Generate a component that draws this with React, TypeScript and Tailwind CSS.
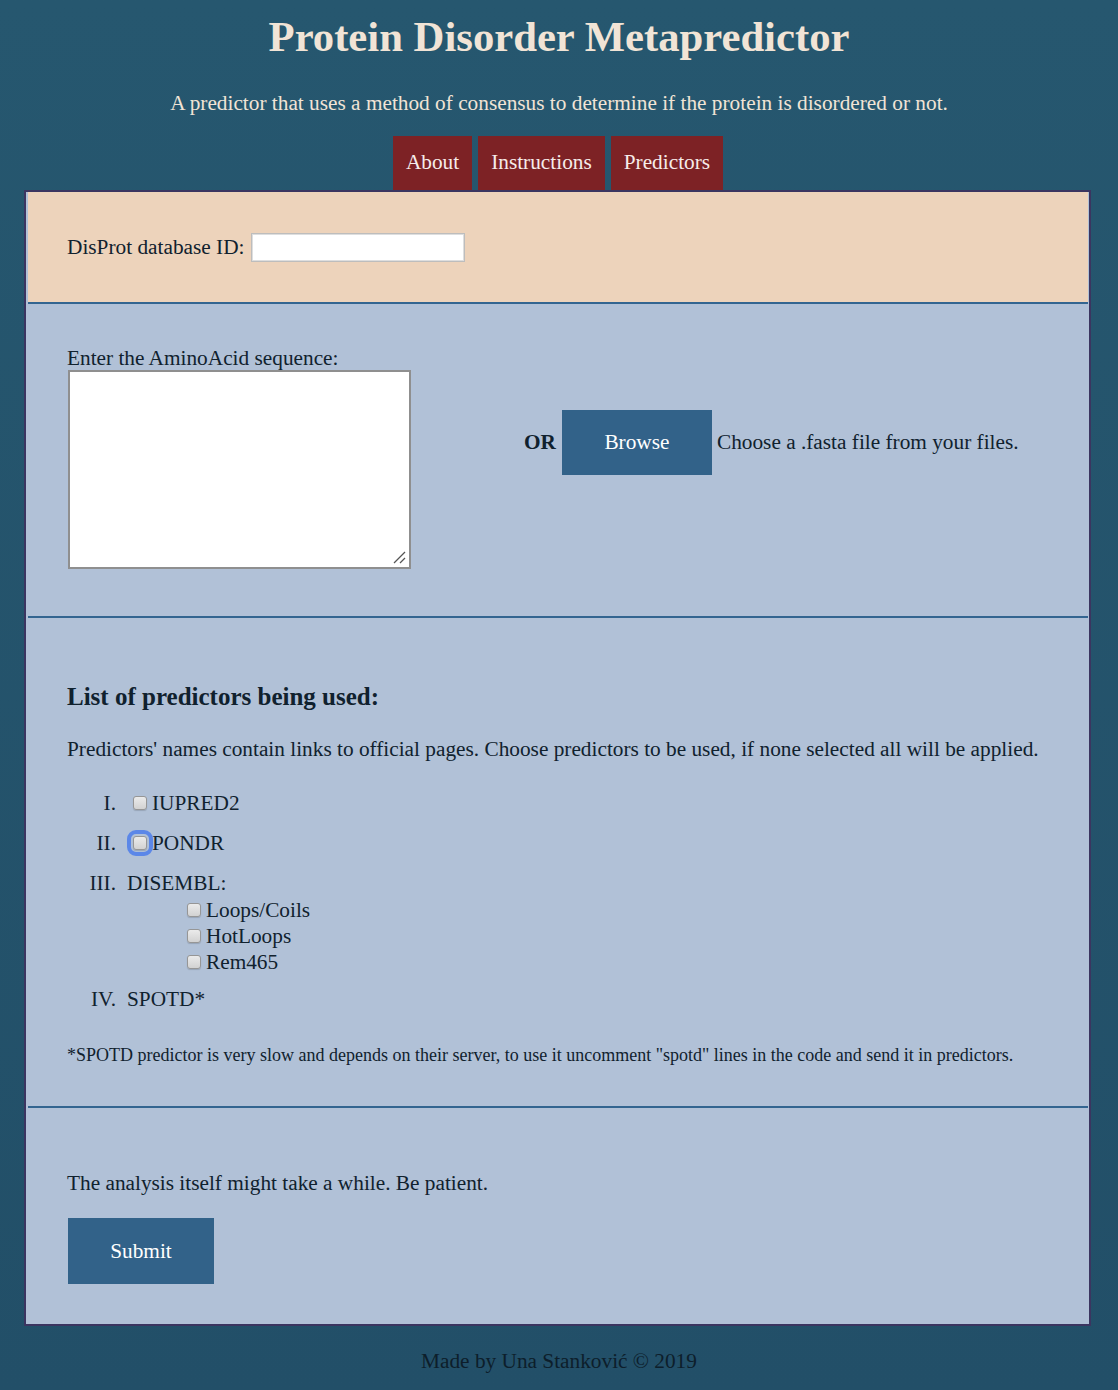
import React from "react";

const serif = { fontFamily: '"Liberation Serif", "Times New Roman", serif' };

function Checkbox({ focused = false }: { focused?: boolean }) {
  return (
    <span
      className={
        "relative inline-block w-[14px] h-[14px] rounded-[3px] border border-[#969696] bg-gradient-to-b from-[#ebebeb] to-[#d2d2d2] shadow-[0_1px_1px_rgba(0,0,0,0.15)] shrink-0 " +
        (focused ? "outline outline-[4px] outline-[#5b87e8] outline-offset-[2px]" : "")
      }
    />
  );
}

function Row({ num, children }: { num: string; children: React.ReactNode }) {
  return (
    <div className="flex items-center h-[24px] leading-[24px]">
      <span className="w-[49px] text-right">{num}</span>
      <span className="ml-[11px] flex items-center">{children}</span>
    </div>
  );
}

export default function App() {
  return (
    <div
      style={serif}
      className="min-h-[1390px] w-full bg-gradient-to-b from-[#26576f] to-[#224f68] text-[21.3px] text-[#10212e]"
    >
      <header className="pt-[13px] text-center text-[#f1e4d6]">
        <h1 className="text-[42.7px] leading-[48px] font-bold">Protein Disorder Metapredictor</h1>
        <p className="mt-[30px] leading-[24px]">
          A predictor that uses a method of consensus to determine if the protein is disordered or not.
        </p>
        <nav className="mt-[21px] flex justify-center gap-[6px] h-[54px] pr-[2px]">
          <a className="bg-[#7d2225] text-[#f6ecea] px-[13px] flex items-center">About</a>
          <a className="bg-[#7d2225] text-[#f6ecea] px-[13px] flex items-center">Instructions</a>
          <a className="bg-[#7d2225] text-[#f6ecea] px-[13px] flex items-center">Predictors</a>
        </nav>
      </header>

      <main className="mx-[24px] w-[1067px] border-2 border-[#3b3560] bg-[#b1c1d7]">
        {/* Section 1 */}
        <section className="ml-[2px] mr-[1px] h-[112px] border-b-2 border-[#336590] bg-[#edd3bb] flex items-center pl-[39px]">
          <label className="leading-[24px]">DisProt database ID:</label>
          <input
            type="text"
            className="ml-[7px] w-[214px] h-[29px] bg-white border-2 border-[#dedede] outline outline-1 outline-[#bdbdbd] -outline-offset-[1px]"
          />
        </section>

        {/* Section 2 */}
        <section className="ml-[2px] mr-[1px] h-[314px] border-b-2 border-[#336590] pt-[42px] pl-[39px] flex items-start">
          <div className="flex flex-col">
            <label className="leading-[24px]">Enter the AminoAcid sequence:</label>
            <div className="relative ml-[1px] w-[343px] h-[199px] bg-white border-2 border-[#8f8f8f]">
              <svg className="absolute right-[3px] bottom-[3px]" width="14" height="14" viewBox="0 0 14 14">
                <line x1="2" y1="13" x2="13" y2="2" stroke="#555" strokeWidth="1.3" />
                <line x1="8" y1="13" x2="13" y2="8" stroke="#555" strokeWidth="1.3" />
              </svg>
            </div>
          </div>
          <div className="ml-[113px] mt-[64px] flex items-center">
            <span className="font-bold">OR</span>
            <button className="ml-[6px] w-[150px] h-[65px] bg-[#326289] text-white pt-[1px]">Browse</button>
            <span className="ml-[5px]">Choose a .fasta file from your files.</span>
          </div>
        </section>

        {/* Section 3 */}
        <section className="ml-[2px] mr-[1px] h-[490px] border-b-2 border-[#336590] pt-[65px] pl-[39px]">
          <h2 className="text-[25px] leading-[28px] font-bold">List of predictors being used:</h2>
          <p className="mt-[26px] leading-[24px]">
            Predictors' names contain links to official pages. Choose predictors to be used, if none selected all will be applied.
          </p>
          <div className="mt-[30px]">
            <Row num="I.">
              <span className="ml-[6px] flex"><Checkbox /></span>
              <span className="ml-[5px]">IUPRED2</span>
            </Row>
            <div className="mt-[16px]">
              <Row num="II.">
                <span className="ml-[6px] flex"><Checkbox focused /></span>
                <span className="ml-[5px]">PONDR</span>
              </Row>
            </div>
            <div className="mt-[16px]">
              <Row num="III.">DISEMBL:</Row>
            </div>
            <div className="ml-[120px] mt-[2px] flex flex-col">
              {["Loops/Coils", "HotLoops", "Rem465"].map((t) => (
                <div key={t} className="flex items-center h-[26px]">
                  <Checkbox />
                  <span className="ml-[5px] leading-[24px]">{t}</span>
                </div>
              ))}
            </div>
            <div className="mt-[12px]">
              <Row num="IV.">SPOTD*</Row>
            </div>
          </div>
          <p className="mt-[34px] text-[18px] leading-[20px]">
            *SPOTD predictor is very slow and depends on their server, to use it uncomment "spotd" lines in the code and send it in predictors.
          </p>
        </section>

        {/* Section 4 */}
        <section className="ml-[2px] mr-[1px] h-[216px] pt-[63px] pl-[39px]">
          <p className="leading-[24px]">The analysis itself might take a while. Be patient.</p>
          <button className="mt-[23px] ml-[1px] w-[146px] h-[66px] bg-[#326289] text-white pt-[1px]">Submit</button>
        </section>
      </main>

      <footer className="mt-[23px] pb-[17px] text-center leading-[24px] text-[#0d1e2b]">
        Made by Una Stanković © 2019
      </footer>
    </div>
  );
}
